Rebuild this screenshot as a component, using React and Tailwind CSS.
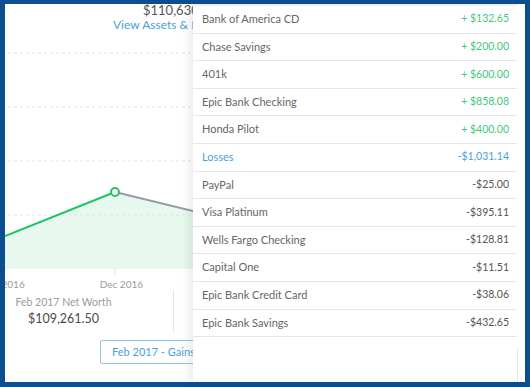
import React from "react";

const rows = [
  { name: "Bank of America CD", amt: "+ $132.65", type: "gain" },
  { name: "Chase Savings", amt: "+ $200.00", type: "gain" },
  { name: "401k", amt: "+ $600.00", type: "gain" },
  { name: "Epic Bank Checking", amt: "+ $858.08", type: "gain" },
  { name: "Honda Pilot", amt: "+ $400.00", type: "gain" },
  { name: "Losses", amt: "-$1,031.14", type: "head" },
  { name: "PayPal", amt: "-$25.00", type: "loss" },
  { name: "Visa Platinum", amt: "-$395.11", type: "loss" },
  { name: "Wells Fargo Checking", amt: "-$128.81", type: "loss" },
  { name: "Capital One", amt: "-$11.51", type: "loss" },
  { name: "Epic Bank Credit Card", amt: "-$38.06", type: "loss" },
  { name: "Epic Bank Savings", amt: "-$432.65", type: "loss" },
];

function Chart() {
  return (
    <svg width="188" height="244" viewBox="0 0 188 244" className="block">
      <path d="M0 204 L110 160 L188 179 L188 237 L0 237 Z" fill="#e7f8ee" />
      {[21, 75, 129, 183].map((y) => (
        <line key={y} x1="3" x2="188" y1={y} y2={y} stroke="#e3e3e6" strokeWidth="1" strokeDasharray="3 3" />
      ))}
      <line x1="110" x2="110" y1="237" y2="243" stroke="#e0e0e0" strokeWidth="1" />
      <path d="M110 160 L188 179" stroke="#9b9ba8" strokeWidth="2" fill="none" />
      <path d="M0 204 L110 160" stroke="#21c462" strokeWidth="2" fill="none" />
      <circle cx="110" cy="160" r="4" fill="#fff" stroke="#21c462" strokeWidth="2" />
    </svg>
  );
}

export default function App() {
  return (
    <div
      className="w-[530px] h-[387px] bg-[#0c4f91] pt-[4px] pl-[5px] pr-[5px] pb-[5px] overflow-hidden"
      style={{ fontFamily: "Lato, 'Liberation Sans', sans-serif" }}
    >
      <div className="flex h-full bg-white">
        <div className="w-[188px] shrink-0 overflow-hidden flex flex-col">
          <div className="pl-[138px] whitespace-nowrap text-[13px] leading-[12px] text-[#555]">$110,630.64</div>
          <div className="mt-[2px] pl-[108px] whitespace-nowrap text-[12px] leading-[14px] text-[#4a9fd8]">
            View Assets &amp; Debts
          </div>
          <Chart />
          <div className="mt-[2px] flex whitespace-nowrap text-[10px] leading-[12px] text-[#9b9b9b]">
            <span className="ml-[-24px]">Nov 2016</span>
            <span className="ml-[75px]">Dec 2016</span>
          </div>
          <div className="flex h-[42px]">
            <div className="w-[117px] shrink-0 flex flex-col items-center pt-[6px] whitespace-nowrap">
              <div className="text-[10.5px] leading-[13px] text-[#9b9b9b]">Feb 2017 Net Worth</div>
              <div className="mt-[2px] text-[12.5px] leading-[15px] text-[#4a4a4a]">$109,261.50</div>
            </div>
            <div className="w-[51px] shrink-0" />
            <div className="border-l border-[#e6e6e6]" />
          </div>
          <div className="mt-[8px] ml-[95px] h-[24px] w-[160px] shrink-0 rounded-[2px] border border-[#8cc6ea] pl-[11px] flex items-center whitespace-nowrap text-[11px] text-[#4a9fd8]">
            Feb 2017 - Gains &amp; Losses
          </div>
        </div>
        <div className="flex-1 flex flex-col bg-white shadow-[-5px_0_8px_rgba(0,0,0,0.07)] relative">
          <div className="w-[324px] border-t-[2px] border-[#eeeef2]">
            {rows.map((r) => (
              <div
                key={r.name}
                className="h-[27.6px] border-b border-[#e6e6ea] flex items-center justify-between pl-[9px] pr-[8px] text-[11px]"
              >
                <span className={r.type === "head" ? "text-[#4a9fd8]" : "text-[#666]"}>{r.name}</span>
                <span
                  className={
                    r.type === "gain"
                      ? "text-[#42c87c] text-[10.5px]"
                      : r.type === "head"
                      ? "text-[#4a9fd8] text-[10.5px]"
                      : "text-[#555] text-[10.5px]"
                  }
                >
                  {r.amt}
                </span>
              </div>
            ))}
          </div>
          <div className="mt-[10px] w-[325px] flex-1 border-r border-[#e8e8ea]" />
        </div>
      </div>
    </div>
  );
}
